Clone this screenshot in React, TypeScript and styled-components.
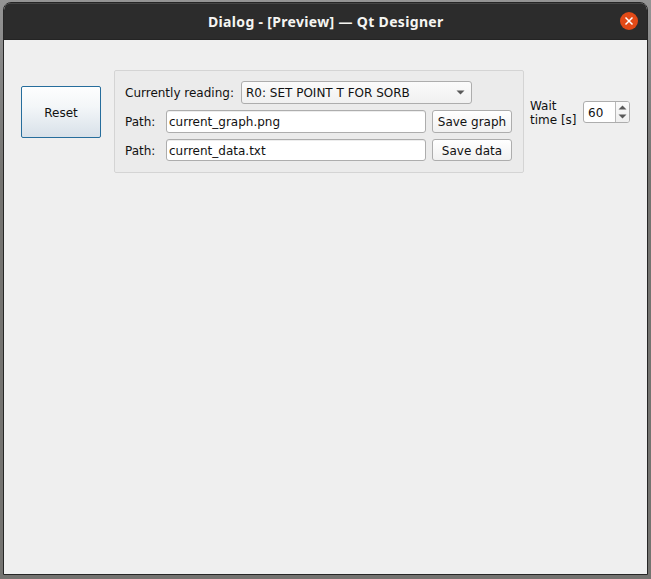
import React from "react";
import styled, { createGlobalStyle } from "styled-components";

const GlobalStyle = createGlobalStyle`
  *, *::before, *::after { box-sizing: border-box; }
  body {
    margin: 0;
    overflow: hidden;
    font: 12px/14px "DejaVu Sans", sans-serif;
    color: #111;
  }
`;

const Desktop = styled.div`
  height: 579px;
  padding: 2px 3px 4px;
  background: linear-gradient(180deg, #949494 0, #858585 70px, #747370 180px, #747370 100%);
`;

const Window = styled.main`
  display: flex;
  flex-direction: column;
  height: 573px;
  border: 1px solid #262626;
  border-radius: 8px 8px 0 0;
  background: #efefef;
  overflow: hidden;
`;

const TitleBar = styled.header`
  display: grid;
  grid-template-columns: 1fr auto 1fr;
  align-items: center;
  height: 37px;
  flex: none;
  padding-right: 9px;
  background: #2c2c2c;
  border-top: 1px solid #454545;
  border-bottom: 1px solid #242424;
`;

const Title = styled.h1`
  grid-column: 2;
  margin: 0 0 0 9px;
  width: 235px;
  font: 700 14px/20px "Noto Sans", sans-serif;
  letter-spacing: 0.33px;
  color: #f5f5f2;
  white-space: nowrap;
`;

const CloseButton = styled.button`
  justify-self: end;
  display: flex;
  width: 18px;
  height: 18px;
  margin-bottom: 1px;
  padding: 0;
  border: 0;
  border-radius: 50%;
  background: #e24a17;
`;

const Content = styled.div`
  display: flex;
  align-items: flex-start;
  padding: 30px 17px 0;
`;

const Button = styled.button<{ $primary?: boolean }>`
  flex: none;
  width: 80px;
  height: ${(p) => (p.$primary ? "52px" : "100%")};
  margin: ${(p) => (p.$primary ? "16px 13px 0 0" : "0")};
  padding: ${(p) => (p.$primary ? "2px 0 0" : "1px 0 0")};
  border: 1px solid ${(p) => (p.$primary ? "#266d9c" : "#adadad")};
  border-radius: ${(p) => (p.$primary ? "2px" : "3px")};
  background: ${(p) =>
    p.$primary
      ? "linear-gradient(#fdfefe, #f3f6f8 40%, #d8e1e9)"
      : "linear-gradient(#fff, #f1f1f1)"};
  color: #111;
  font: inherit;
  white-space: nowrap;
`;

const Group = styled.section`
  display: grid;
  grid-template-rows: 23px 23px 22px;
  row-gap: 6px;
  flex: none;
  width: 410px;
  height: 103px;
  padding: 10px 11px 0 10px;
  border: 1px solid #d4d4d4;
  border-radius: 2px;
  background: #ebebeb;
`;

const Row = styled.div`
  display: flex;
  align-items: stretch;
`;

const Label = styled.label<{ $width: number }>`
  flex: none;
  width: ${(p) => p.$width}px;
  align-self: flex-start;
  padding-top: 5px;
  white-space: nowrap;
`;

const Combo = styled.div`
  display: flex;
  align-items: center;
  justify-content: space-between;
  width: 231px;
  padding: 0 6px 0 4px;
  border: 1px solid #adadad;
  border-radius: 3px;
  background: linear-gradient(#fbfbfb, #f0f0f0);
  white-space: nowrap;
`;

const PathInput = styled.input`
  width: 260px;
  height: 100%;
  margin-right: 6px;
  padding: 1px 2px 0;
  border: 1px solid #adadad;
  border-radius: 3px;
  background: #fff;
  box-shadow: inset 0 1px #ededed;
  color: #111;
  font: inherit;
  outline: none;
`;

const WaitLabel = styled.label`
  flex: none;
  width: 53px;
  margin: 29px 0 0 6px;
  white-space: nowrap;
`;

const SpinBox = styled.div`
  display: flex;
  flex: none;
  width: 47px;
  height: 22px;
  margin-top: 31px;
  border: 1px solid #adadad;
  border-radius: 3px;
  background: #fff;
  overflow: hidden;
`;

const SpinValue = styled.span`
  flex: 1;
  padding: 4px 0 0 4px;
`;

const Stepper = styled.div`
  display: flex;
  flex-direction: column;
  align-items: center;
  justify-content: center;
  gap: 4px;
  width: 14px;
  border-left: 1px solid #b9b9b9;
  background: linear-gradient(#fafafa, #efefef);
`;

const Arrow = ({ up = false }: { up?: boolean }) => (
  <svg width="9" height="5" viewBox="0 0 9 5">
    <path d={up ? "M.5 4.5 4.5.5l4 4Z" : "M.5.5h8l-4 4Z"} fill="#595959" />
  </svg>
);

const PathRow = ({ value, action }: { value: string; action: string }) => (
  <Row>
    <Label $width={41}>Path:</Label>
    <PathInput aria-label="Path" defaultValue={value} spellCheck={false} />
    <Button>{action}</Button>
  </Row>
);

export default function App() {
  return (
    <Desktop>
      <GlobalStyle />
      <Window>
        <TitleBar>
          <Title>Dialog - [Preview] — Qt Designer</Title>
          <CloseButton aria-label="Close">
            <svg width="18" height="18" viewBox="0 0 18 18">
              <path d="m5.5 5.5 7 7m0-7-7 7" stroke="#fff" strokeWidth="1.5" />
            </svg>
          </CloseButton>
        </TitleBar>
        <Content>
          <Button $primary>Reset</Button>
          <Group>
            <Row>
              <Label $width={116}>Currently reading:</Label>
              <Combo>
                R0: SET POINT T FOR SORB
                <Arrow />
              </Combo>
            </Row>
            <PathRow value="current_graph.png" action="Save graph" />
            <PathRow value="current_data.txt" action="Save data" />
          </Group>
          <WaitLabel>
            Wait
            <br />
            time [s]
          </WaitLabel>
          <SpinBox>
            <SpinValue>60</SpinValue>
            <Stepper>
              <Arrow up />
              <Arrow />
            </Stepper>
          </SpinBox>
        </Content>
      </Window>
    </Desktop>
  );
}
